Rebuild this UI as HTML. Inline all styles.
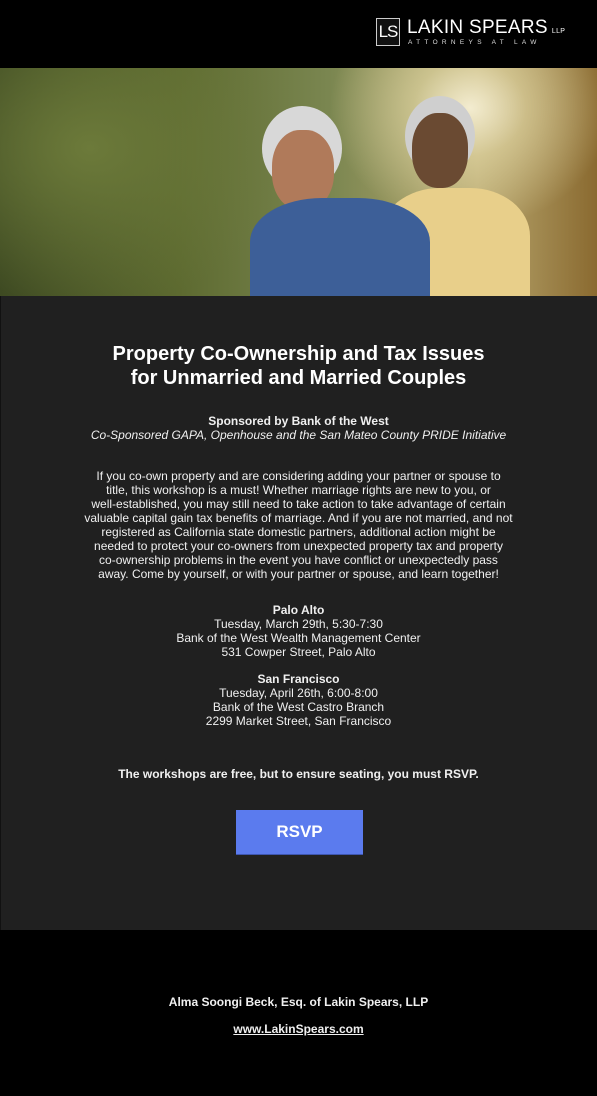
<!DOCTYPE html>
<html><head><meta charset="utf-8"><style>
body{margin:0;width:597px;height:1096px;background:#000;position:relative;overflow:hidden;font-family:"Liberation Sans",Arial,sans-serif;color:#f0f0f0}
.t{position:absolute;left:0;width:597px;text-align:center;font-size:12px;line-height:14px}
.hero{position:absolute;left:0;top:68px;width:597px;height:228px;overflow:hidden;
background:radial-gradient(ellipse 140px 120px at 470px 40px,#f3ecd0 0%,rgba(230,220,170,0.6) 40%,rgba(0,0,0,0) 100%),radial-gradient(ellipse 200px 160px at 90px 80px,#6c7a3a,rgba(0,0,0,0) 100%),linear-gradient(90deg,#3e4a22 0%,#5d6a30 30%,#7a8650 55%,#b8a870 80%,#8a6a30 100%)}
</style></head><body>
<div style="position:absolute;left:376px;top:18px;width:24px;height:28px;border:1px solid #ccc;box-sizing:border-box;background:#111;color:#fff;font-size:17px;line-height:26px;text-align:center;letter-spacing:-1px">LS</div>
<div style="position:absolute;left:407px;top:17px;font-size:19px;color:#fff;letter-spacing:0.3px;line-height:22px">LAKIN SPEARS<span style="font-size:7px;margin-left:4px">LLP</span></div>
<div style="position:absolute;left:408px;top:39px;font-size:6.5px;color:#ddd;letter-spacing:4.3px">ATTORNEYS AT LAW</div>
<div class="hero">
<div style="position:absolute;left:405px;top:28px;width:70px;height:80px;border-radius:50%;background:#cfcfcf"></div>
<div style="position:absolute;left:412px;top:45px;width:56px;height:75px;border-radius:45%;background:#6a4a32"></div>
<div style="position:absolute;left:380px;top:120px;width:150px;height:120px;border-radius:40% 40% 0 0;background:#e8cf8a"></div>
<div style="position:absolute;left:262px;top:38px;width:80px;height:85px;border-radius:50%;background:#d8d8d8"></div>
<div style="position:absolute;left:272px;top:62px;width:62px;height:80px;border-radius:45%;background:#b07a5a"></div>
<div style="position:absolute;left:250px;top:130px;width:180px;height:110px;border-radius:40% 40% 0 0;background:#3d5f98"></div>
</div>
<div style="position:absolute;left:0;top:296px;width:597px;height:634px;background:#202020;border-left:1px solid #111;box-sizing:border-box"></div>
<div class="t" style="top:342px;font-size:20px;line-height:24px;color:#fff;font-weight:bold">Property Co-Ownership and Tax Issues<br>for Unmarried and Married Couples</div>
<div class="t" style="top:414px"><b>Sponsored by Bank of the West</b><br><i>Co-Sponsored GAPA, Openhouse and the San Mateo County PRIDE Initiative</i></div>
<div class="t" style="top:469px">If you co-own property and are considering adding your partner or spouse to<br>title, this workshop is a must! Whether marriage rights are new to you, or<br>well-established, you may still need to take action to take advantage of certain<br>valuable capital gain tax benefits of marriage. And if you are not married, and not<br>registered as California state domestic partners, additional action might be<br>needed to protect your co-owners from unexpected property tax and property<br>co-ownership problems in the event you have conflict or unexpectedly pass<br>away. Come by yourself, or with your partner or spouse, and learn together!</div>
<div class="t" style="top:603px"><b>Palo Alto</b><br>Tuesday, March 29th, 5:30-7:30<br>Bank of the West Wealth Management Center<br>531 Cowper Street, Palo Alto</div>
<div class="t" style="top:672px"><b>San Francisco</b><br>Tuesday, April 26th, 6:00-8:00<br>Bank of the West Castro Branch<br>2299 Market Street, San Francisco</div>
<div class="t" style="top:767px"><b>The workshops are free, but to ensure seating, you must RSVP.</b></div>
<div style="position:absolute;left:236px;top:810px;width:127px;height:45px;background:#5b7bee;border-bottom:1px solid #3e56b0;box-sizing:border-box;color:#fff;font-weight:bold;font-size:17px;line-height:44px;text-align:center">RSVP</div>
<div class="t" style="top:995px"><b>Alma Soongi Beck, Esq. of Lakin Spears, LLP</b></div>
<div class="t" style="top:1022px"><b><u>www.LakinSpears.com</u></b></div>
</body></html>
